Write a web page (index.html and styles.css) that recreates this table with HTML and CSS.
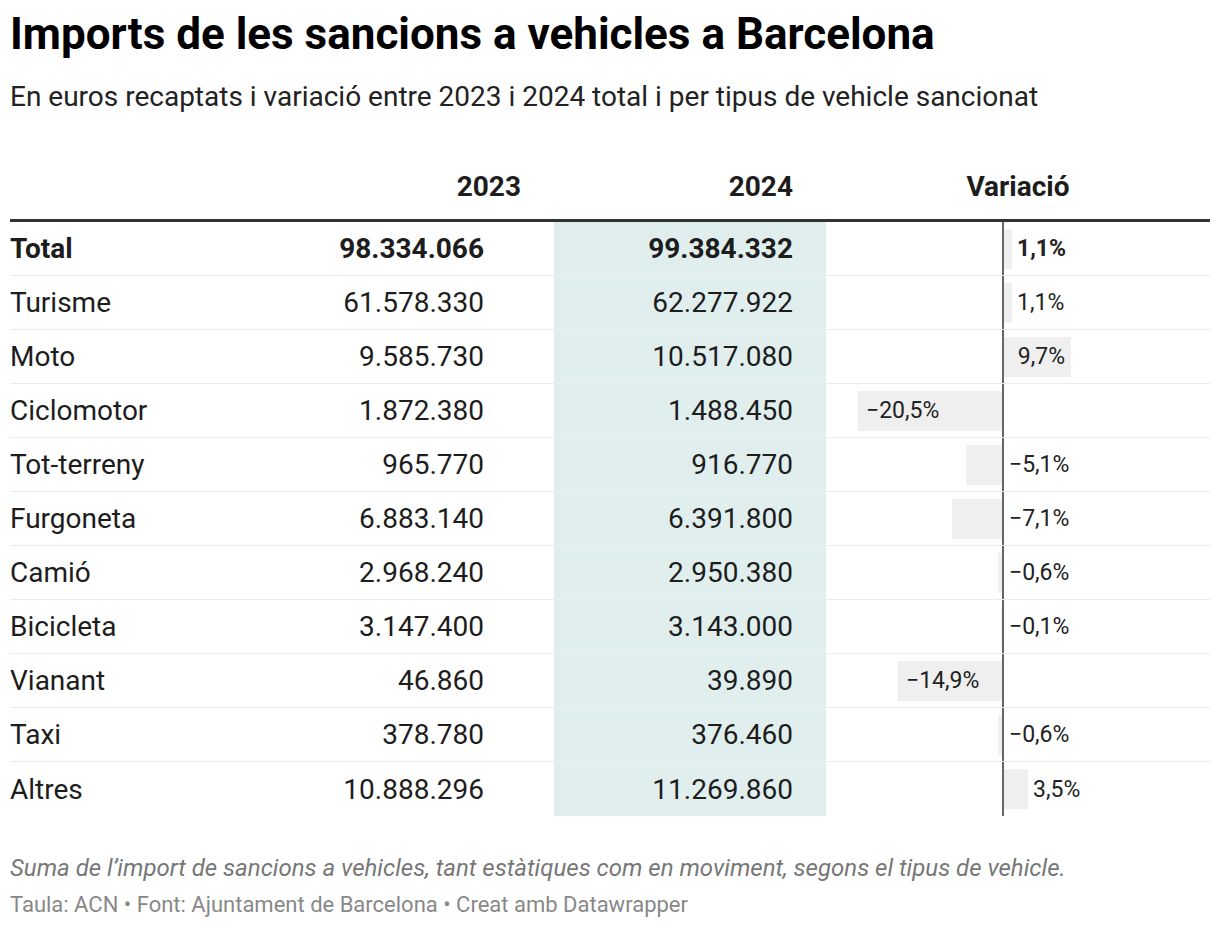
FILE: index.html
```html
<!DOCTYPE html>
<html lang="ca">
<head>
<meta charset="utf-8">
<title>Imports de les sancions a vehicles a Barcelona</title>
<link rel="stylesheet" href="styles.css">
</head>
<body>
<div class="chart">
  <h1 class="title">Imports de les sancions a vehicles a Barcelona</h1>
  <p class="subtitle">En euros recaptats i variació entre 2023 i 2024 total i per tipus de vehicle sancionat</p>

  <div class="table">
    <div class="row head">
      <div class="c-label"></div>
      <div class="c-y1">2023</div>
      <div class="c-y2">2024</div>
      <div class="c-var">Variació</div>
    </div>

    <div class="row bold">
      <div class="c-label">Total</div>
      <div class="c-y1">98.334.066</div>
      <div class="c-y2">99.384.332</div>
      <div class="c-var"><div class="neg"></div><div class="axis"></div><div class="pos"><div class="bar" style="width:8px"></div><span class="lab out">1,1%</span></div></div>
    </div>
    <div class="row">
      <div class="c-label">Turisme</div>
      <div class="c-y1">61.578.330</div>
      <div class="c-y2">62.277.922</div>
      <div class="c-var"><div class="neg"></div><div class="axis"></div><div class="pos"><div class="bar" style="width:8px"></div><span class="lab out">1,1%</span></div></div>
    </div>
    <div class="row">
      <div class="c-label">Moto</div>
      <div class="c-y1">9.585.730</div>
      <div class="c-y2">10.517.080</div>
      <div class="c-var"><div class="neg"></div><div class="axis"></div><div class="pos"><div class="bar in-pos" style="width:67px"><span class="lab">9,7%</span></div></div></div>
    </div>
    <div class="row">
      <div class="c-label">Ciclomotor</div>
      <div class="c-y1">1.872.380</div>
      <div class="c-y2">1.488.450</div>
      <div class="c-var"><div class="neg"><div class="bar in-neg" style="width:144px"><span class="lab">−20,5%</span></div></div><div class="axis"></div><div class="pos"></div></div>
    </div>
    <div class="row">
      <div class="c-label">Tot-terreny</div>
      <div class="c-y1">965.770</div>
      <div class="c-y2">916.770</div>
      <div class="c-var"><div class="neg"><div class="bar" style="width:36px"></div></div><div class="axis"></div><div class="pos"><span class="lab out-neg">−5,1%</span></div></div>
    </div>
    <div class="row">
      <div class="c-label">Furgoneta</div>
      <div class="c-y1">6.883.140</div>
      <div class="c-y2">6.391.800</div>
      <div class="c-var"><div class="neg"><div class="bar" style="width:50px"></div></div><div class="axis"></div><div class="pos"><span class="lab out-neg">−7,1%</span></div></div>
    </div>
    <div class="row">
      <div class="c-label">Camió</div>
      <div class="c-y1">2.968.240</div>
      <div class="c-y2">2.950.380</div>
      <div class="c-var"><div class="neg"><div class="bar" style="width:4px"></div></div><div class="axis"></div><div class="pos"><span class="lab out-neg">−0,6%</span></div></div>
    </div>
    <div class="row">
      <div class="c-label">Bicicleta</div>
      <div class="c-y1">3.147.400</div>
      <div class="c-y2">3.143.000</div>
      <div class="c-var"><div class="neg"><div class="bar" style="width:1px"></div></div><div class="axis"></div><div class="pos"><span class="lab out-neg">−0,1%</span></div></div>
    </div>
    <div class="row">
      <div class="c-label">Vianant</div>
      <div class="c-y1">46.860</div>
      <div class="c-y2">39.890</div>
      <div class="c-var"><div class="neg"><div class="bar in-neg" style="width:104px"><span class="lab">−14,9%</span></div></div><div class="axis"></div><div class="pos"></div></div>
    </div>
    <div class="row">
      <div class="c-label">Taxi</div>
      <div class="c-y1">378.780</div>
      <div class="c-y2">376.460</div>
      <div class="c-var"><div class="neg"><div class="bar" style="width:4px"></div></div><div class="axis"></div><div class="pos"><span class="lab out-neg">−0,6%</span></div></div>
    </div>
    <div class="row last">
      <div class="c-label">Altres</div>
      <div class="c-y1">10.888.296</div>
      <div class="c-y2">11.269.860</div>
      <div class="c-var"><div class="neg"></div><div class="axis"></div><div class="pos"><div class="bar" style="width:24px"></div><span class="lab out">3,5%</span></div></div>
    </div>
  </div>

  <p class="notes">Suma de l’import de sancions a vehicles, tant estàtiques com en moviment, segons el tipus de vehicle.</p>
  <p class="byline">Taula: ACN • Font: Ajuntament de Barcelona • Creat amb Datawrapper</p>
</div>
</body>
</html>
```

FILE: styles.css
```css
* { box-sizing: border-box; }
html, body { margin: 0; padding: 0; background: #fff; }
body {
  font-family: Roboto, "Liberation Sans", sans-serif;
  color: #1d1d1d;
}
.chart {
  width: 1220px;
  padding: 8px 10px 0 10px;
}
.title {
  margin: 0;
  font-size: 44px;
  line-height: 52px;
  font-weight: 700;
  color: #000;
}
.subtitle {
  margin: 20px 0 0 0;
  font-size: 28px;
  line-height: 34px;
  color: #222;
}
.table {
  margin-top: 49px;
  width: 1200px;
}
.row {
  display: grid;
  grid-template-columns: 290px 254px 272px 384px;
  height: 54px;
  border-bottom: 1px solid rgba(0,0,0,0.08);
  font-size: 28px;
}
.row > div {
  display: flex;
  align-items: center;
}
.row.last { border-bottom: none; }
.row.head {
  height: 59px;
  border-bottom: 3px solid #333;
  font-weight: 700;
  font-size: 28px;
  line-height: 34px;
}
.row.head > div { align-items: flex-end; padding-bottom: 15px; }
.row.head .c-y1 { padding-right: 33px; }
.row.head .c-y2 { background: none; }
.row.head .c-var { justify-content: center; }
.row.bold { font-weight: 700; }
.c-y1 { justify-content: flex-end; padding-right: 70px; }
.c-y2 { justify-content: flex-end; padding-right: 33px; background: #e0efee; }
.row .c-var { align-items: stretch; }
.neg {
  width: 176px;
  display: flex;
  justify-content: flex-end;
  align-items: center;
}
.axis {
  width: 2px;
  background: #666;
}
.pos {
  flex: 1;
  display: flex;
  align-items: center;
}
.bar {
  height: 40px;
  background: #efefef;
  display: flex;
  align-items: center;
}
.lab {
  font-size: 23px;
  color: #222;
  white-space: nowrap;
}
.bar.in-neg { justify-content: flex-start; padding-left: 8px; }
.bar.in-pos { justify-content: flex-end; padding-right: 6px; }
.lab.out { margin-left: 5px; }
.lab.out-neg { margin-left: 5px; }
.notes {
  margin: 37px 0 0 0;
  font-size: 24px;
  line-height: 30px;
  font-style: italic;
  color: #777;
}
.byline {
  margin: 8px 0 0 0;
  font-size: 22px;
  line-height: 28px;
  color: #888;
}
```
